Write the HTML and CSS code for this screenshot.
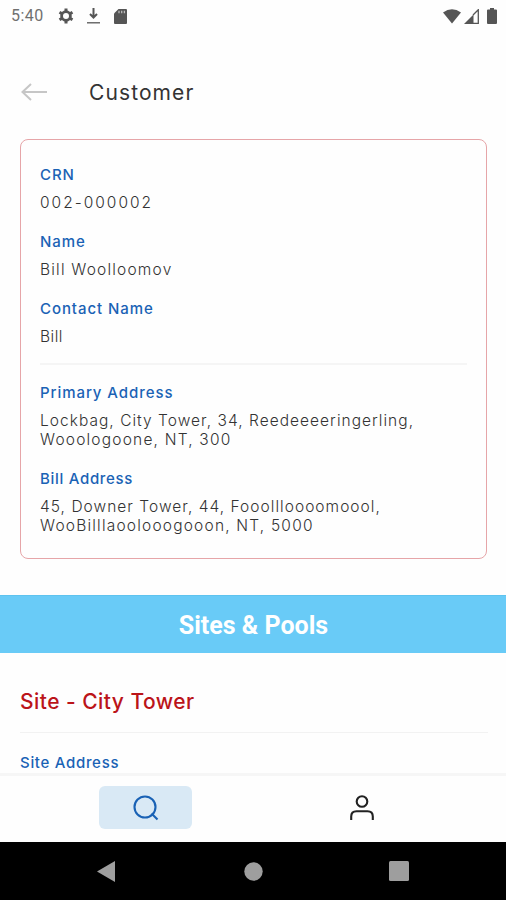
FILE: index.html
```html
<!DOCTYPE html>
<html lang="en">

<head>
    <meta charset="UTF-8">
    <title>Customer</title>
    <link rel="stylesheet" href="styles.css">
</head>

<body>
    <div class="status">
        <span class="time">5:40</span>
        <svg class="gear" width="16" height="16" viewBox="0 0 16 16">
            <circle cx="8" cy="8" r="4.4" fill="none" stroke="#555" stroke-width="2.8" />
            <path d="M8 .5v3M8 12.500v3M1.500 4.250l2.600 1.500M11.900 10.250l2.600 1.500M1.500 11.750l2.600-1.500M11.900 5.750l2.600-1.500" stroke="#555" stroke-width="3" />
        </svg>
        <svg class="download" width="13" height="16" viewBox="0 0 13 16">
            <path d="M6.500 0v9M3 6l3.500 3.500L10 6" fill="none" stroke="#555" stroke-width="2" />
            <path d="M0 14.800h13" stroke="#555" stroke-width="1.300" />
        </svg>
        <svg class="card-icon" width="13" height="15" viewBox="0 0 13 15">
            <path d="M4.500 0H12a1 1 0 0 1 1 1v13a1 1 0 0 1-1 1H1a1 1 0 0 1-1-1V4.500z" fill="#555" />
            <path d="M5 1.800v2.400M7.700 1.800v2.400M10.400 1.800v2.400" stroke="#bbb" stroke-width="1.300" />
        </svg>
        <div class="signals">
            <svg width="18" height="15" viewBox="0 0 18 15">
                <path d="M0 3.500Q9-3 18 3.500L9 14.500z" fill="#555" />
            </svg>
            <svg class="cell" width="15" height="15" viewBox="0 0 15 15">
                <path d="M0 15L9.500 5.500V15z" fill="#555" />
                <path d="M9 6l5.300-5.300v13.600H9" fill="none" stroke="#555" stroke-width="1.300" />
            </svg>
            <svg class="battery" width="10" height="16" viewBox="0 0 10 16">
                <path d="M3 0h4v1.500h2a1 1 0 0 1 1 1V15a1 1 0 0 1-1 1H1a1 1 0 0 1-1-1V2.500a1 1 0 0 1 1-1h2z" fill="#555" />
            </svg>
        </div>
    </div>

    <div class="header">
        <svg width="26" height="18" viewBox="0 0 26 18">
            <path d="M10 1L1.500 9l8.500 8M1.500 9H26" fill="none" stroke="#c6c6c6" stroke-width="2" />
        </svg>
        <h1>Customer</h1>
    </div>

    <div class="card">
        <div class="label">CRN</div>
        <div class="value number">002-000002</div>
        <div class="label">Name</div>
        <div class="value">Bill Woolloomov</div>
        <div class="label">Contact Name</div>
        <div class="value short">Bill</div>
        <div class="line"></div>
        <div class="label">Primary Address</div>
        <div class="value"><span class="street">Lockbag, City Tower, 34, Reedeeeeringerling,</span><br>Wooologoone, NT, 300</div>
        <div class="label bill">Bill Address</div>
        <div class="value"><span class="street">45, Downer Tower, 44, Fooollloooomoool,</span><br>WooBilllaoolooogooon, NT, 5000</div>
    </div>

    <div class="banner">Sites &amp; Pools</div>

    <div class="site">
        <h2>Site - City Tower</h2>
        <div class="label">Site Address</div>
    </div>

    <div class="tabs">
        <div class="tab active">
            <svg width="26" height="26" viewBox="0 0 26 26">
                <circle cx="12" cy="12" r="10.500" />
                <path d="M18.500 18.500l6 6" />
            </svg>
        </div>
        <div class="tab">
            <svg width="24" height="26" viewBox="0 0 24 26">
                <circle cx="12" cy="6.500" r="5.300" />
                <path d="M1.200 25v-3.500q0-5.300 5.300-5.300h11q5.300 0 5.300 5.300V25" />
            </svg>
        </div>
    </div>

    <div class="navbar">
        <svg width="18" height="21" viewBox="0 0 18 21"><path d="M0 10.500L18 0v21z" fill="#9e9e9e" /></svg>
        <svg class="home" width="19" height="19" viewBox="0 0 19 19"><circle cx="9.500" cy="9.500" r="9.200" fill="#9e9e9e" /></svg>
        <svg width="20" height="20" viewBox="0 0 20 20"><rect width="20" height="20" rx="1.500" fill="#9e9e9e" /></svg>
    </div>
</body>

</html>
```
FILE: styles.css
```css
* {
    margin: 0;
    padding: 0;
    box-sizing: border-box;
}

body {
    width: 506px;
    height: 900px;
    overflow: hidden;
    display: flex;
    flex-direction: column;
    background: #fefefe;
    font-family: Inter, "Liberation Sans", sans-serif;
    color: #333;
}

svg {
    display: block;
    flex: none;
}

.status {
    display: flex;
    align-items: center;
    height: 32px;
    padding: 0 9px 0 11px;
    flex: none;
}

.time {
    width: 47px;
    font: 16px/32px Roboto, sans-serif;
    letter-spacing: 0.5px;
    color: #707070;
}

.download {
    margin-left: 13px;
}

.card-icon {
    margin-left: 14px;
}

.signals {
    display: flex;
    align-items: center;
    margin-left: auto;
}

.cell {
    margin-left: 3px;
}

.battery {
    margin-left: 8px;
}

.header {
    display: flex;
    align-items: center;
    height: 107px;
    padding-left: 21px;
    padding-top: 13px;
    flex: none;
}

.header h1 {
    margin-left: 42px;
    font-size: 21px;
    font-weight: 400;
    letter-spacing: 1.1px;
}

.card {
    width: 467px;
    height: 420px;
    margin-left: 20px;
    padding: 25px 19px 0;
    border: 1px solid #e6a5a8;
    border-radius: 8px;
    flex: none;
}

.label {
    font-size: 15px;
    line-height: 19px;
    font-weight: 500;
    letter-spacing: 0.93px;
    color: #1a62b5;
}

.label.bill,
.site .label {
    letter-spacing: 0.7px;
}

.value {
    margin: 9px 0 20px;
    font-size: 15.5px;
    line-height: 19px;
    font-weight: 300;
    letter-spacing: 1.2px;
    white-space: nowrap;
}

.value.number {
    letter-spacing: 2px;
}

.value.short {
    letter-spacing: 0.5px;
}

.value .street {
    letter-spacing: 1.03px;
}

.line {
    height: 2px;
    margin: -3px 0 18px;
    background: #f5f5f5;
}

.banner {
    height: 58px;
    margin-top: 36px;
    background: #69cbf7;
    border-top: 1px solid #5ec3ef;
    font: bold 25px/60px Roboto, sans-serif;
    text-align: center;
    text-indent: 1px;
    color: #fff;
    flex: none;
}

.site {
    height: 120px;
    padding: 29px 18px 0 20px;
    overflow: hidden;
    flex: none;
}

.site h2 {
    height: 51px;
    margin-bottom: 20px;
    border-bottom: 1px solid #f2f2f2;
    font-size: 21px;
    line-height: 40px;
    font-weight: 500;
    letter-spacing: 0.45px;
    color: #bb1419;
}

.tabs {
    display: flex;
    height: 69px;
    padding: 10px 98px 0 99px;
    border-top: 3px solid #f6f6f6;
    justify-content: space-between;
    flex: none;
}

.tab {
    display: flex;
    align-items: center;
    justify-content: center;
    width: 93px;
    height: 43px;
    border-radius: 6px;
}

.tab svg {
    fill: none;
    stroke: #222;
    stroke-width: 2.1;
}

.tab.active {
    background: #d9e9f5;
}

.tab.active svg {
    stroke: #1a62b5;
}

.navbar {
    display: flex;
    align-items: center;
    justify-content: space-between;
    height: 58px;
    padding: 0 97px;
    background: #000;
    flex: none;
}

.navbar .home {
    margin-left: 3px;
}
```
